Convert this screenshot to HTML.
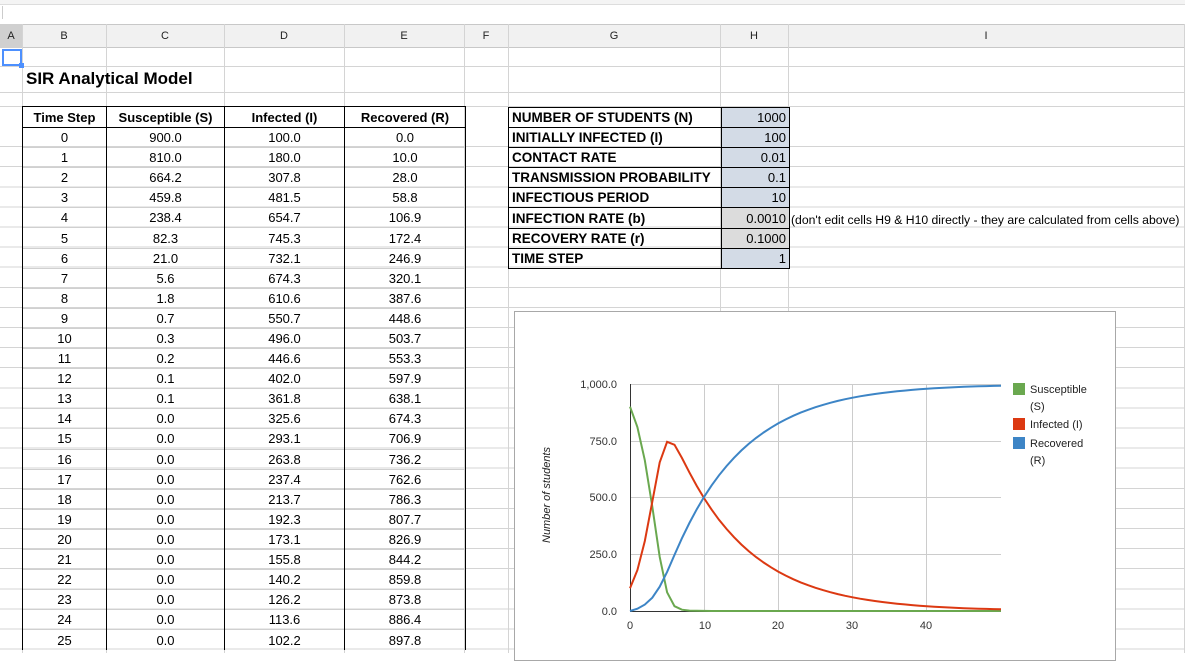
<!DOCTYPE html>
<html><head><meta charset="utf-8"><style>
*{margin:0;padding:0;box-sizing:border-box}
body{width:1185px;height:653px;overflow:hidden;background:#fff;font-family:"Liberation Sans",Arial,sans-serif;font-size:13px;color:#000;position:relative}
.a{position:absolute}
.vl{position:absolute;width:1px;background:#d4d4d4}
.hl{position:absolute;height:1px;background:#d4d4d4;left:0;width:1185px}
.ch{position:absolute;top:24px;height:24px;line-height:24px;text-align:center;font-size:11px;color:#222}
table{border-collapse:collapse;position:absolute;table-layout:fixed}
#d td{height:20.1px;text-align:center;border-left:1px solid #000;border-right:1px solid #000;border-top:1px solid #d0d0d0;padding:0;line-height:19px;font-size:13px}
#d tr.h td{height:21px;font-weight:bold;border:1px solid #000}
#p td{height:20.1px;border:1px solid #000;padding:0 3px;line-height:19px;font-size:13px;white-space:nowrap}
#p td:first-child{font-weight:bold;font-size:13.5px}
#p td.v{text-align:right;background:#d3dbe6}
#p td.g{background:#dcdcdc}
</style></head><body>
<div class="a" style="left:0;top:0;width:1185px;height:5px;background:#f4f4f4;border-bottom:1px solid #ddd"></div>
<div class="a" style="left:2px;top:6px;width:1px;height:13px;background:#ccc"></div>
<div class="a" style="left:0;top:24px;width:1185px;height:24px;background:#f1f1f1;border-top:1px solid #c8c8c8;border-bottom:1px solid #c8c8c8"></div>
<div class="a" style="left:0;top:24px;width:22px;height:24px;background:#d0d0d0"></div>
<div class="hl" style="top:66px"></div>
<div class="hl" style="top:92px"></div>
<div class="hl" style="top:106px"></div>
<div class="a" style="left:0;top:127px;width:1185px;height:526px;background:repeating-linear-gradient(to bottom,transparent 0,transparent 19.1px,#d4d4d4 19.1px,#d4d4d4 20.1px)"></div>
<div class="vl" style="left:22px;top:24px;height:629px"></div>
<div class="vl" style="left:106px;top:24px;height:629px"></div>
<div class="vl" style="left:224px;top:24px;height:629px"></div>
<div class="vl" style="left:344px;top:24px;height:629px"></div>
<div class="vl" style="left:464px;top:24px;height:629px"></div>
<div class="vl" style="left:508px;top:24px;height:629px"></div>
<div class="vl" style="left:720px;top:24px;height:629px"></div>
<div class="vl" style="left:788px;top:24px;height:629px"></div>
<div class="vl" style="left:1184px;top:24px;height:629px"></div>
<div class="ch" style="left:0;width:22px">A</div>
<div class="ch" style="left:22px;width:84px">B</div>
<div class="ch" style="left:106px;width:118px">C</div>
<div class="ch" style="left:224px;width:120px">D</div>
<div class="ch" style="left:344px;width:120px">E</div>
<div class="ch" style="left:464px;width:44px">F</div>
<div class="ch" style="left:508px;width:212px">G</div>
<div class="ch" style="left:720px;width:68px">H</div>
<div class="ch" style="left:788px;width:396px">I</div>
<div class="a" style="left:2px;top:49px;width:20px;height:17px;border:2px solid #4d90fe"></div>
<div class="a" style="left:19px;top:63px;width:5px;height:5px;background:#4d90fe"></div>
<div class="a" style="left:26px;top:68px;font-size:17px;font-weight:bold;line-height:22px">SIR Analytical Model</div>

<table id="d" style="left:22px;top:106px;width:443px">
<colgroup><col style="width:84px"><col style="width:118px"><col style="width:120px"><col style="width:121px"></colgroup>
<tr class="h"><td>Time Step</td><td>Susceptible (S)</td><td>Infected (I)</td><td>Recovered (R)</td></tr>
<tr><td>0</td><td>900.0</td><td>100.0</td><td>0.0</td></tr>
<tr><td>1</td><td>810.0</td><td>180.0</td><td>10.0</td></tr>
<tr><td>2</td><td>664.2</td><td>307.8</td><td>28.0</td></tr>
<tr><td>3</td><td>459.8</td><td>481.5</td><td>58.8</td></tr>
<tr><td>4</td><td>238.4</td><td>654.7</td><td>106.9</td></tr>
<tr><td>5</td><td>82.3</td><td>745.3</td><td>172.4</td></tr>
<tr><td>6</td><td>21.0</td><td>732.1</td><td>246.9</td></tr>
<tr><td>7</td><td>5.6</td><td>674.3</td><td>320.1</td></tr>
<tr><td>8</td><td>1.8</td><td>610.6</td><td>387.6</td></tr>
<tr><td>9</td><td>0.7</td><td>550.7</td><td>448.6</td></tr>
<tr><td>10</td><td>0.3</td><td>496.0</td><td>503.7</td></tr>
<tr><td>11</td><td>0.2</td><td>446.6</td><td>553.3</td></tr>
<tr><td>12</td><td>0.1</td><td>402.0</td><td>597.9</td></tr>
<tr><td>13</td><td>0.1</td><td>361.8</td><td>638.1</td></tr>
<tr><td>14</td><td>0.0</td><td>325.6</td><td>674.3</td></tr>
<tr><td>15</td><td>0.0</td><td>293.1</td><td>706.9</td></tr>
<tr><td>16</td><td>0.0</td><td>263.8</td><td>736.2</td></tr>
<tr><td>17</td><td>0.0</td><td>237.4</td><td>762.6</td></tr>
<tr><td>18</td><td>0.0</td><td>213.7</td><td>786.3</td></tr>
<tr><td>19</td><td>0.0</td><td>192.3</td><td>807.7</td></tr>
<tr><td>20</td><td>0.0</td><td>173.1</td><td>826.9</td></tr>
<tr><td>21</td><td>0.0</td><td>155.8</td><td>844.2</td></tr>
<tr><td>22</td><td>0.0</td><td>140.2</td><td>859.8</td></tr>
<tr><td>23</td><td>0.0</td><td>126.2</td><td>873.8</td></tr>
<tr><td>24</td><td>0.0</td><td>113.6</td><td>886.4</td></tr>
<tr><td>25</td><td>0.0</td><td>102.2</td><td>897.8</td></tr>
</table>

<table id="p" style="left:508px;top:107px;width:281px">
<colgroup><col style="width:213px"><col style="width:68px"></colgroup>
<tr><td>NUMBER OF STUDENTS (N)</td><td class="v">1000</td></tr>
<tr><td>INITIALLY INFECTED (I)</td><td class="v">100</td></tr>
<tr><td>CONTACT RATE</td><td class="v">0.01</td></tr>
<tr><td>TRANSMISSION PROBABILITY</td><td class="v">0.1</td></tr>
<tr><td>INFECTIOUS PERIOD</td><td class="v">10</td></tr>
<tr><td>INFECTION RATE (b)</td><td class="v g">0.0010</td></tr>
<tr><td>RECOVERY RATE (r)</td><td class="v g">0.1000</td></tr>
<tr><td>TIME STEP</td><td class="v">1</td></tr>
</table>
<div class="a" style="left:791px;top:212px;font-size:12.2px;line-height:16px;white-space:nowrap">(don't edit cells H9 &amp; H10 directly - they are calculated from cells above)</div>

<div class="a" style="left:514px;top:311px;width:602px;height:350px;background:#fff;border:1px solid #a8a8a8"></div>
<svg class="a" style="left:0;top:0" width="1185" height="653" font-family="Liberation Sans, sans-serif" font-size="11">
<g stroke="#ccc" stroke-width="1">
<line x1="630" y1="384.5" x2="1001" y2="384.5"/><line x1="630" y1="441.5" x2="1001" y2="441.5"/>
<line x1="630" y1="497.5" x2="1001" y2="497.5"/><line x1="630" y1="554.5" x2="1001" y2="554.5"/>
<line x1="704.5" y1="384" x2="704.5" y2="611"/><line x1="778.5" y1="384" x2="778.5" y2="611"/>
<line x1="852.5" y1="384" x2="852.5" y2="611"/><line x1="926.5" y1="384" x2="926.5" y2="611"/>
</g>
<line x1="630.5" y1="384" x2="630.5" y2="611" stroke="#333"/>
<line x1="630" y1="611.5" x2="1001" y2="611.5" stroke="#333"/>
<g text-anchor="end" fill="#333">
<text x="617" y="388">1,000.0</text><text x="617" y="445">750.0</text><text x="617" y="501">500.0</text><text x="617" y="558">250.0</text><text x="617" y="615">0.0</text>
</g>
<g text-anchor="middle" fill="#333">
<text x="630" y="629">0</text><text x="705" y="629">10</text><text x="778" y="629">20</text><text x="852" y="629">30</text><text x="926" y="629">40</text>
<text x="815" y="662" font-style="italic">Time step</text>
</g>
<text transform="translate(550,495) rotate(-90)" text-anchor="middle" font-style="italic" fill="#222">Number of students</text>
<polyline id="cs" fill="none" stroke="#6aa84f" stroke-width="2"/>
<polyline id="ci" fill="none" stroke="#dc3912" stroke-width="2"/>
<polyline id="cr" fill="none" stroke="#3d85c6" stroke-width="2"/>
<rect x="1013" y="383" width="12" height="12" fill="#6aa84f"/>
<rect x="1013" y="418" width="12" height="12" fill="#dc3912"/>
<rect x="1013" y="437" width="12" height="12" fill="#3d85c6"/>
<g fill="#222">
<text x="1030" y="393">Susceptible</text><text x="1030" y="410">(S)</text>
<text x="1030" y="428">Infected (I)</text>
<text x="1030" y="447">Recovered</text><text x="1030" y="464">(R)</text>
</g>
</svg>
<script>
var S=900,I=100,R=0,b=0.001,r=0.1,ps=[],pi=[],pr=[];
function X(t){return (630+7.42*t).toFixed(1)}function Y(v){return (611-0.227*v).toFixed(1)}
for(var t=0;t<=50;t++){ps.push(X(t)+","+Y(S));pi.push(X(t)+","+Y(I));pr.push(X(t)+","+Y(R));
var n=b*S*I,m=r*I;S-=n;I+=n-m;R+=m;}
document.getElementById("cs").setAttribute("points",ps.join(" "));
document.getElementById("ci").setAttribute("points",pi.join(" "));
document.getElementById("cr").setAttribute("points",pr.join(" "));
</script>
</body></html>
